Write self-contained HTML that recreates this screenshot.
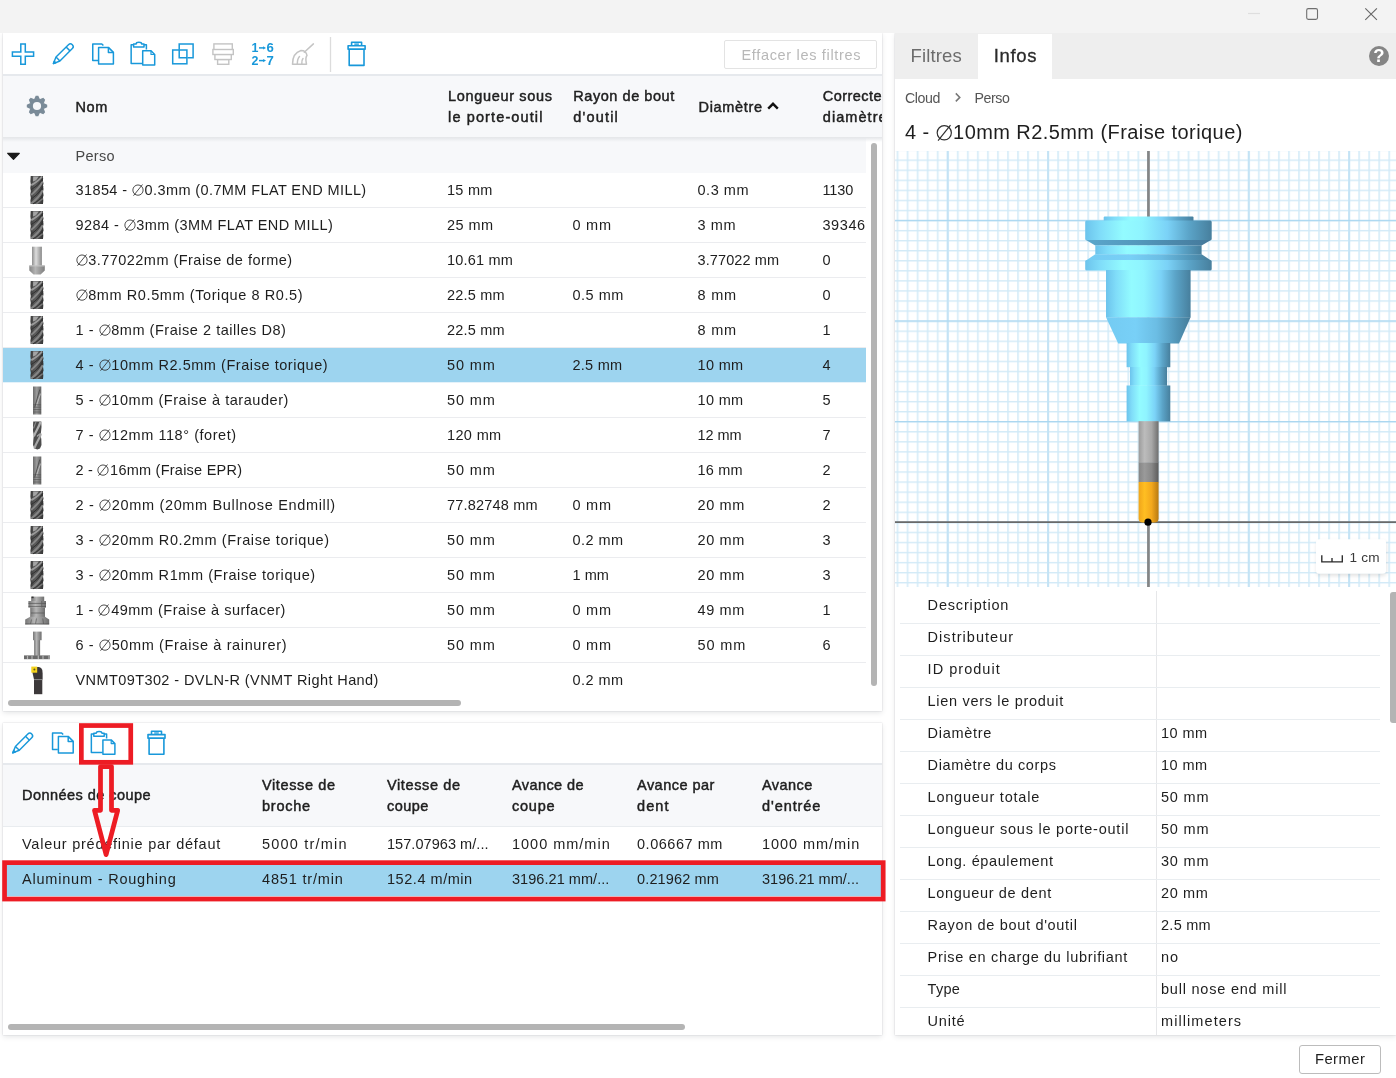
<!DOCTYPE html>
<html><head><meta charset="utf-8">
<style>
*{box-sizing:border-box;margin:0;padding:0}
html{background:#fff}html,body{width:1396px;height:1078px;overflow:hidden}body{will-change:transform;background:transparent}
body{font-family:"Liberation Sans",sans-serif;color:#1e1e1e;position:relative;font-size:14.5px;letter-spacing:.45px}
.abs{position:absolute}
#titlebar{left:0;top:0;width:1396px;height:33px;background:#f3f3f3;z-index:5}
.panel{background:#fff;box-shadow:0 2px 5px rgba(60,70,80,.13),0 0 1.5px rgba(60,70,80,.22);overflow:hidden}
#p1{left:3px;top:33px;width:879px;height:678px}
#p2{left:3px;top:723px;width:879px;height:312px}
#p3{left:895px;top:33px;width:501px;height:1002px}
.tb{left:0;top:0;width:100%;height:43px;border-bottom:2px solid #e6e9ed}
.tb svg{position:absolute}
.hdr{background:#f7f8fa;font-weight:normal;-webkit-text-stroke:.45px #1c1c1c;letter-spacing:.55px;color:#222;left:0;width:100%}
.hdr span, .row span, .grp span{position:absolute;white-space:nowrap}
.hdr span{line-height:21px}
.row{position:absolute;left:0;width:863px;height:35px;border-bottom:1px solid #ebecef}
.row span{top:0;line-height:34px}
.row>svg{position:absolute;left:16px;top:0px}
.row.sel{background:#9dd4ef;border-bottom-color:#e4f2fa}
.c0{left:72.5px}.c1{left:444px}.c2{left:569.4px}.c3{left:694.5px}.c4{left:819.4px}
.d0{left:19px}.d1{left:259px}.d2{left:384px}.d3{left:509px}.d4{left:634px}.d5{left:759px}
.sb{background:#b4b4b4;border-radius:3px}
.prow{position:absolute;left:5px;width:480px;height:32px;border-bottom:1px solid #e9edf0}
.prow span{position:absolute;top:0;line-height:27px;white-space:nowrap}
.prow .k{left:27.6px;letter-spacing:.65px}.prow .v{left:261px}
#clr{left:721px;top:6.5px;width:153px;height:29px;border:1px solid #e3e3e3;border-radius:2px;color:#b8b8b8;text-align:center;line-height:28px;font-size:14.5px}
.hshadow{left:0;width:100%;height:5px;background:linear-gradient(#e3e5e8,rgba(240,241,243,0))}
.tab{top:12px;font-size:18.5px;line-height:22px}
.bc{font-size:14.2px;color:#555;line-height:20px;top:55px}.b1{left:10px}.b2{left:79.6px}
.ttl{left:10px;top:86px;font-size:20px;line-height:26px;color:#1e1e1e;white-space:nowrap}
#close{left:1299.4px;top:1045.2px;width:81.4px;height:28.5px;border:1px solid #bcbcbc;border-radius:3px;background:#fff;text-align:center;line-height:27px;font-size:14.8px;color:#1e1e1e}
.h1{top:20.3px}.h2{top:10px}.h3{top:30.6px}
.row:last-of-type{}
.row.last{border-bottom-color:transparent}
.hc1{left:445.1px}.hc2{left:570.3px}.hc3{left:695.5px}.hc4{left:819.8px}.t1{top:21px}.t2{top:10px}.t3{top:31px}
.tf{left:15.6px;color:#6c6c6c}.ti{left:98.7px;color:#2a2a2a;-webkit-text-stroke:.3px #2a2a2a}.clt{left:738.4px;top:7.5px;line-height:29px;color:#b8b8b8;font-size:14.5px}
.gp{top:0;line-height:37px;color:#484848}
.dia{display:inline-block;width:.876em;height:.897em;vertical-align:-.085em;overflow:visible}
</style></head><body>
<svg width="0" height="0" style="position:absolute"><defs><linearGradient id="gd" x1="0" x2="1" y1="0" y2="0"><stop offset="0" stop-color="#3a3a3a"/><stop offset=".35" stop-color="#5c5c5c"/><stop offset=".7" stop-color="#484848"/><stop offset="1" stop-color="#343434"/></linearGradient><linearGradient id="gl" x1="0" x2="1" y1="0" y2="0"><stop offset="0" stop-color="#8e8e8e"/><stop offset=".4" stop-color="#dcdcdc"/><stop offset="1" stop-color="#8a8a8a"/></linearGradient><linearGradient id="gm" x1="0" x2="1" y1="0" y2="0"><stop offset="0" stop-color="#5c5c5c"/><stop offset=".4" stop-color="#ababab"/><stop offset="1" stop-color="#555"/></linearGradient><linearGradient id="gl2" x1="0" x2="1" y1="0" y2="0"><stop offset="0" stop-color="#858585"/><stop offset=".4" stop-color="#b4b4b4"/><stop offset="1" stop-color="#7e7e7e"/></linearGradient><linearGradient id="gt" x1="0" x2="1" y1="0" y2="0"><stop offset="0" stop-color="#6c6c6c"/><stop offset=".45" stop-color="#9c9c9c"/><stop offset="1" stop-color="#646464"/></linearGradient><linearGradient id="gf" x1="0" x2="1" y1="0" y2="0"><stop offset="0" stop-color="#767676"/><stop offset=".4" stop-color="#b6b6b6"/><stop offset="1" stop-color="#6e6e6e"/></linearGradient><filter id="tb" x="-10%" y="-10%" width="120%" height="120%"><feGaussianBlur stdDeviation=".55"/></filter></defs></svg>
<div id="titlebar" class="abs">
<svg class="abs" style="left:1240px;top:0" width="156" height="33" viewBox="1240 0 156 33"><path d="M1248 13.5 H1260" stroke="#dedede" stroke-width="1.2"/><rect x="1306.7" y="8.6" width="10.8" height="10.8" rx="1.6" fill="none" stroke="#6f6f6f" stroke-width="1.1"/><path d="M1365.3 8.3 L1376.9 19.9 M1376.9 8.3 L1365.3 19.9" stroke="#666" stroke-width="1.1"/></svg>
</div>

<div id="p1" class="abs panel">
 <div class="abs tb"><svg width="879" height="41" viewBox="3 33 879 41" style="position:absolute;left:0;top:0"><path d="M20.8 43.9 H25.3 V51.9 H33.6 V56.3 H25.3 V64.3 H20.8 V56.3 H12.4 V51.9 H20.8 Z" fill="none" stroke="#1898da" stroke-width="1.5" stroke-linejoin="miter"/><g transform="translate(53 64) scale(1.0) rotate(45)" fill="none" stroke="#1898da" stroke-width="1.45" stroke-linejoin="round"><path d="M0 -0.6 L-2.75 -7 V-24.6 a2.75 2.75 0 0 1 5.5 0 V-7 Z"/><path d="M-2.75 -21.3 H2.75"/><path d="M-2.75 -7 H2.75"/><path d="M-1.1 -2.9 L0 -0.6 L1.1 -2.9Z" fill="#1898da"/></g><g transform="translate(92 43.2) scale(1.0)" fill="none" stroke="#1898da" stroke-width="1.5" stroke-linejoin="round"><path d="M6 17.4 H0.75 V0.75 H9.8 L11.4 2.4"/><path d="M6.6 4.2 H16.4 L21.4 9.2 V20.9 H6.6 Z" fill="#fff"/><path d="M16.4 4.2 V9.2 H21.4"/></g><g transform="translate(130.4 41.5) scale(1.0)" fill="none" stroke="#1898da" stroke-width="1.5" stroke-linejoin="round"><path d="M12 21.9 H0.75 V3.3 H16 V8"/><path d="M3.2 5.6 V2.6 H5.6 C5.8 0.2 11.2 0.2 11.4 2.6 H13.6 V5.6 Z" fill="#fff"/><path d="M12.3 9.3 H20.6 L24.3 13 V23.6 H12.3 Z" fill="#fff"/><path d="M20.6 9.3 V13 H24.3" stroke-width="1.2"/></g><g fill="none" stroke="#1898da" stroke-width="1.5"><path d="M179.2 49.8 V44 H193.1 V57.8 H187.4"/><rect x="172.7" y="50" width="14.2" height="13.8"/><path d="M179.2 50 V57.8 H187"/></g><g fill="#fff" stroke="#c4c4c4" stroke-width="1.4"><rect x="217.6" y="59.5" width="11.2" height="4.8"/><rect x="214.9" y="54.4" width="16.4" height="5.1"/><rect x="213.9" y="43.9" width="18.4" height="5.8"/><rect x="212.9" y="49.5" width="20.4" height="5"/></g><g font-family="Liberation Sans" font-weight="bold" font-size="12.2" fill="#1898da"><text x="251.4" y="52" textLength="7.4" lengthAdjust="spacingAndGlyphs">1</text><text x="266.6" y="52" textLength="7.8" lengthAdjust="spacingAndGlyphs">6</text><text x="251.4" y="64.8" textLength="7.4" lengthAdjust="spacingAndGlyphs">2</text><text x="266.6" y="64.8" textLength="7.8" lengthAdjust="spacingAndGlyphs">7</text></g><g stroke="#1898da" stroke-width="1.5" fill="#1898da"><path d="M259 47.9 H264" fill="none"/><path d="M263.2 46.2 L266 47.9 L263.2 49.6Z" stroke="none"/><path d="M259 60.6 H264" fill="none"/><path d="M263.2 58.9 L266 60.6 L263.2 62.3Z" stroke="none"/></g><g fill="none" stroke="#c4c4c4" stroke-width="1.5" stroke-linecap="round" stroke-linejoin="round"><path d="M313.4 43.9 L304.3 52.2"/><path d="M301 50.5 C296 52 292.5 57 292.5 64.2 H306.5 C305.8 60 305 58 307 55.5 C306.5 52.5 304 50.5 301 50.5Z"/><path d="M297.3 64 C297.3 60 298 58 299.5 56.5"/><path d="M301.8 64 C301.5 61 302 59.5 303 58.5"/></g><path d="M330.5 37 V72" stroke="#dcdcdc" stroke-width="1.3"/><g transform="translate(347.3 41.5) scale(1.0)" fill="none" stroke="#1898da" stroke-width="1.6" stroke-linejoin="round"><path d="M4.3 4.2 V0.8 H14.3 V4.2"/><path d="M7 2.6 H11.6" stroke-width="1.3"/><rect x="0.8" y="4.2" width="17" height="3.6"/><rect x="1.9" y="7.8" width="14.8" height="16.1"/></g></svg>
  <div class="abs" id="clr"></div><span class="abs clt" style="letter-spacing:0.677px">Effacer les filtres</span>
 </div>
 <div class="abs hdr" style="top:43px;height:61px">
  <svg class="abs" style="left:22px;top:18px" width="24" height="24" viewBox="-12 -12 24 24"><g fill="#7a8b98"><circle r="7.4"/><path transform="rotate(0)" d="M-3 -6.6 L-1.3 -10.2 H1.3 L3 -6.6 Z M-3 6.6 L-1.3 10.2 H1.3 L3 6.6 Z"/><path transform="rotate(45)" d="M-3 -6.6 L-1.3 -10.2 H1.3 L3 -6.6 Z M-3 6.6 L-1.3 10.2 H1.3 L3 6.6 Z"/><path transform="rotate(90)" d="M-3 -6.6 L-1.3 -10.2 H1.3 L3 -6.6 Z M-3 6.6 L-1.3 10.2 H1.3 L3 6.6 Z"/><path transform="rotate(135)" d="M-3 -6.6 L-1.3 -10.2 H1.3 L3 -6.6 Z M-3 6.6 L-1.3 10.2 H1.3 L3 6.6 Z"/></g><circle r="4.1" fill="#f7f8fa"/></svg>
  <span class="c0 t1" style="letter-spacing:0.587px">Nom</span>
  <span class="hc1 t2" style="letter-spacing:0.655px">Longueur sous</span><span class="hc1 t3" style="letter-spacing:1.116px">le porte-outil</span>
  <span class="hc2 t2" style="letter-spacing:0.548px">Rayon de bout</span><span class="hc2 t3" style="letter-spacing:1.177px">d'outil</span>
  <span class="hc3 t1" style="letter-spacing:0.682px">Diamètre</span>
  <svg class="abs" style="left:763px;top:24px" width="14" height="12" viewBox="0 0 14 12"><path d="M2.2 8.6 L7 3.8 L11.8 8.6" fill="none" stroke="#111" stroke-width="2.4"/></svg>
  <span class="hc4 t2" style="letter-spacing:0.456px">Correcte</span><span class="hc4 t3" style="letter-spacing:1.054px">diamètre</span>
 </div>
 <div class="abs grp" style="left:0;top:105px;width:863px;height:34.5px;background:#f7f8fa">
  <svg class="abs" style="left:2px;top:13px" width="18" height="11" viewBox="0 0 18 11"><path d="M2.7 2.3 H14.3 L8.5 8.3 Z" fill="#1a1a1a" stroke="#1a1a1a" stroke-width="1.2" stroke-linejoin="round"/></svg>
  <span class="c0 gp" style="letter-spacing:0.302px">Perso</span>
 </div>
 <div class="abs hshadow" style="top:104px"></div>
<div class="row" style="top:139.5px"><svg width="36" height="34" viewBox="0 0 36 34" style=""><g transform="translate(0 -0.6)"><path d="M11.7 3.6 H24 V9 L24.5 11 L24 13 L24.5 16.5 L24 19 L24.5 22.5 L24 25 L24.3 28 L24 31.6 H11.7 L11.4 28 L11.8 25.5 L11.3 22 L11.8 18.5 L11.3 15.5 L11.8 12 L11.4 9 Z" fill="url(#gd)"/><g filter="url(#tb)" fill="none" stroke-linecap="round"><path d="M14.2 4.2 H19.8 L17 7.8 L14 9Z" fill="#a4a4a4" stroke="none"/><path d="M13 12.4 C16 10.5 20 8 22.6 4.6" stroke="#9a9a9a" stroke-width="2"/><path d="M12.8 22 C15.5 19.5 21 15 23.2 9.8" stroke="#868686" stroke-width="2"/><path d="M12.8 30.6 C15.5 28.5 21 24 23.2 18.6" stroke="#848484" stroke-width="2"/><path d="M17.8 31 L23.3 26.6" stroke="#7a7a7a" stroke-width="1.5"/><path d="M12.3 17.2 C15.5 15 21 11.5 23.6 6.8" stroke="#303030" stroke-width="1"/><path d="M12.3 26.6 C15.5 24.2 21 20 23.7 14.6" stroke="#303030" stroke-width="1"/><path d="M14.3 31.3 C17 29.8 22 27 23.7 23.2" stroke="#303030" stroke-width="1"/></g></g></svg><span class="c0" style="letter-spacing:0.395px">31854 - <svg class="dia" viewBox="0 0 12.7 13"><circle cx="6" cy="7.1" r="5.15" fill="none" stroke="#2e2e2e" stroke-width=".85"/><path d="M1.5 12.7 L10.5 1.5" stroke="#2e2e2e" stroke-width=".85"/></svg>0.3mm (0.7MM FLAT END MILL)</span><span class="c1" style="letter-spacing:0.268px">15 mm</span><span class="c3" style="letter-spacing:0.531px">0.3 mm</span><span class="c4" style="letter-spacing:-0.096px">1130</span></div>
<div class="row" style="top:174.5px"><svg width="36" height="34" viewBox="0 0 36 34" style=""><g transform="translate(0 -0.6)"><path d="M11.7 3.6 H24 V9 L24.5 11 L24 13 L24.5 16.5 L24 19 L24.5 22.5 L24 25 L24.3 28 L24 31.6 H11.7 L11.4 28 L11.8 25.5 L11.3 22 L11.8 18.5 L11.3 15.5 L11.8 12 L11.4 9 Z" fill="url(#gd)"/><g filter="url(#tb)" fill="none" stroke-linecap="round"><path d="M14.2 4.2 H19.8 L17 7.8 L14 9Z" fill="#a4a4a4" stroke="none"/><path d="M13 12.4 C16 10.5 20 8 22.6 4.6" stroke="#9a9a9a" stroke-width="2"/><path d="M12.8 22 C15.5 19.5 21 15 23.2 9.8" stroke="#868686" stroke-width="2"/><path d="M12.8 30.6 C15.5 28.5 21 24 23.2 18.6" stroke="#848484" stroke-width="2"/><path d="M17.8 31 L23.3 26.6" stroke="#7a7a7a" stroke-width="1.5"/><path d="M12.3 17.2 C15.5 15 21 11.5 23.6 6.8" stroke="#303030" stroke-width="1"/><path d="M12.3 26.6 C15.5 24.2 21 20 23.7 14.6" stroke="#303030" stroke-width="1"/><path d="M14.3 31.3 C17 29.8 22 27 23.7 23.2" stroke="#303030" stroke-width="1"/></g></g></svg><span class="c0" style="letter-spacing:0.426px">9284 - <svg class="dia" viewBox="0 0 12.7 13"><circle cx="6" cy="7.1" r="5.15" fill="none" stroke="#2e2e2e" stroke-width=".85"/><path d="M1.5 12.7 L10.5 1.5" stroke="#2e2e2e" stroke-width=".85"/></svg>3mm (3MM FLAT END MILL)</span><span class="c1" style="letter-spacing:0.418px">25 mm</span><span class="c2" style="letter-spacing:0.817px">0 mm</span><span class="c3" style="letter-spacing:0.617px">3 mm</span><span class="c4" style="letter-spacing:0.618px">39346</span></div>
<div class="row" style="top:209.5px"><svg width="36" height="34" viewBox="0 0 36 34" style=""><rect x="13" y="3.7" width="9.9" height="19" fill="url(#gl)"/><path d="M10.3 22.6 H25.8 V27.4 L21.6 31.4 H14.5 L10.3 27.4 Z" fill="url(#gl2)"/><path d="M10.6 23 H25.5" stroke="#c4c4c4" stroke-width=".9"/></svg><span class="c0" style="letter-spacing:0.467px"><svg class="dia" viewBox="0 0 12.7 13"><circle cx="6" cy="7.1" r="5.15" fill="none" stroke="#2e2e2e" stroke-width=".85"/><path d="M1.5 12.7 L10.5 1.5" stroke="#2e2e2e" stroke-width=".85"/></svg>3.77022mm (Fraise de forme)</span><span class="c1" style="letter-spacing:0.202px">10.61 mm</span><span class="c3" style="letter-spacing:0.110px">3.77022 mm</span><span class="c4">0</span></div>
<div class="row" style="top:244.5px"><svg width="36" height="34" viewBox="0 0 36 34" style=""><g transform="translate(0 -0.6)"><path d="M11.7 3.6 H24 V9 L24.5 11 L24 13 L24.5 16.5 L24 19 L24.5 22.5 L24 25 L24.3 28 L24 31.6 H11.7 L11.4 28 L11.8 25.5 L11.3 22 L11.8 18.5 L11.3 15.5 L11.8 12 L11.4 9 Z" fill="url(#gd)"/><g filter="url(#tb)" fill="none" stroke-linecap="round"><path d="M14.2 4.2 H19.8 L17 7.8 L14 9Z" fill="#a4a4a4" stroke="none"/><path d="M13 12.4 C16 10.5 20 8 22.6 4.6" stroke="#9a9a9a" stroke-width="2"/><path d="M12.8 22 C15.5 19.5 21 15 23.2 9.8" stroke="#868686" stroke-width="2"/><path d="M12.8 30.6 C15.5 28.5 21 24 23.2 18.6" stroke="#848484" stroke-width="2"/><path d="M17.8 31 L23.3 26.6" stroke="#7a7a7a" stroke-width="1.5"/><path d="M12.3 17.2 C15.5 15 21 11.5 23.6 6.8" stroke="#303030" stroke-width="1"/><path d="M12.3 26.6 C15.5 24.2 21 20 23.7 14.6" stroke="#303030" stroke-width="1"/><path d="M14.3 31.3 C17 29.8 22 27 23.7 23.2" stroke="#303030" stroke-width="1"/></g></g></svg><span class="c0" style="letter-spacing:0.592px"><svg class="dia" viewBox="0 0 12.7 13"><circle cx="6" cy="7.1" r="5.15" fill="none" stroke="#2e2e2e" stroke-width=".85"/><path d="M1.5 12.7 L10.5 1.5" stroke="#2e2e2e" stroke-width=".85"/></svg>8mm R0.5mm (Torique 8 R0.5)</span><span class="c1" style="letter-spacing:0.213px">22.5 mm</span><span class="c2" style="letter-spacing:0.531px">0.5 mm</span><span class="c3" style="letter-spacing:0.817px">8 mm</span><span class="c4">0</span></div>
<div class="row" style="top:279.5px"><svg width="36" height="34" viewBox="0 0 36 34" style=""><g transform="translate(0 -0.6)"><path d="M11.7 3.6 H24 V9 L24.5 11 L24 13 L24.5 16.5 L24 19 L24.5 22.5 L24 25 L24.3 28 L24 31.6 H11.7 L11.4 28 L11.8 25.5 L11.3 22 L11.8 18.5 L11.3 15.5 L11.8 12 L11.4 9 Z" fill="url(#gd)"/><g filter="url(#tb)" fill="none" stroke-linecap="round"><path d="M14.2 4.2 H19.8 L17 7.8 L14 9Z" fill="#a4a4a4" stroke="none"/><path d="M13 12.4 C16 10.5 20 8 22.6 4.6" stroke="#9a9a9a" stroke-width="2"/><path d="M12.8 22 C15.5 19.5 21 15 23.2 9.8" stroke="#868686" stroke-width="2"/><path d="M12.8 30.6 C15.5 28.5 21 24 23.2 18.6" stroke="#848484" stroke-width="2"/><path d="M17.8 31 L23.3 26.6" stroke="#7a7a7a" stroke-width="1.5"/><path d="M12.3 17.2 C15.5 15 21 11.5 23.6 6.8" stroke="#303030" stroke-width="1"/><path d="M12.3 26.6 C15.5 24.2 21 20 23.7 14.6" stroke="#303030" stroke-width="1"/><path d="M14.3 31.3 C17 29.8 22 27 23.7 23.2" stroke="#303030" stroke-width="1"/></g></g></svg><span class="c0" style="letter-spacing:0.528px">1 - <svg class="dia" viewBox="0 0 12.7 13"><circle cx="6" cy="7.1" r="5.15" fill="none" stroke="#2e2e2e" stroke-width=".85"/><path d="M1.5 12.7 L10.5 1.5" stroke="#2e2e2e" stroke-width=".85"/></svg>8mm (Fraise 2 tailles D8)</span><span class="c1" style="letter-spacing:0.213px">22.5 mm</span><span class="c3" style="letter-spacing:0.817px">8 mm</span><span class="c4">1</span></div>
<div class="row sel" style="top:314.5px"><svg width="36" height="34" viewBox="0 0 36 34" style=""><g transform="translate(0 -0.6)"><path d="M11.7 3.6 H24 V9 L24.5 11 L24 13 L24.5 16.5 L24 19 L24.5 22.5 L24 25 L24.3 28 L24 31.6 H11.7 L11.4 28 L11.8 25.5 L11.3 22 L11.8 18.5 L11.3 15.5 L11.8 12 L11.4 9 Z" fill="url(#gd)"/><g filter="url(#tb)" fill="none" stroke-linecap="round"><path d="M14.2 4.2 H19.8 L17 7.8 L14 9Z" fill="#a4a4a4" stroke="none"/><path d="M13 12.4 C16 10.5 20 8 22.6 4.6" stroke="#9a9a9a" stroke-width="2"/><path d="M12.8 22 C15.5 19.5 21 15 23.2 9.8" stroke="#868686" stroke-width="2"/><path d="M12.8 30.6 C15.5 28.5 21 24 23.2 18.6" stroke="#848484" stroke-width="2"/><path d="M17.8 31 L23.3 26.6" stroke="#7a7a7a" stroke-width="1.5"/><path d="M12.3 17.2 C15.5 15 21 11.5 23.6 6.8" stroke="#303030" stroke-width="1"/><path d="M12.3 26.6 C15.5 24.2 21 20 23.7 14.6" stroke="#303030" stroke-width="1"/><path d="M14.3 31.3 C17 29.8 22 27 23.7 23.2" stroke="#303030" stroke-width="1"/></g></g></svg><span class="c0" style="letter-spacing:0.551px">4 - <svg class="dia" viewBox="0 0 12.7 13"><circle cx="6" cy="7.1" r="5.15" fill="none" stroke="#2e2e2e" stroke-width=".85"/><path d="M1.5 12.7 L10.5 1.5" stroke="#2e2e2e" stroke-width=".85"/></svg>10mm R2.5mm (Fraise torique)</span><span class="c1" style="letter-spacing:0.893px">50 mm</span><span class="c2" style="letter-spacing:0.291px">2.5 mm</span><span class="c3" style="letter-spacing:0.343px">10 mm</span><span class="c4">4</span></div>
<div class="row" style="top:349.5px"><svg width="36" height="34" viewBox="0 0 36 34" style=""><rect x="14" y="3.5" width="8.3" height="28" fill="url(#gt)"/><g filter="url(#tb)" stroke-linecap="round"><path d="M20.6 7 L15.8 24" stroke="#4a4a4a" stroke-width=".9"/><path d="M21.4 11 L17.4 23" stroke="#c0c0c0" stroke-width=".9"/><g stroke="#555" stroke-width=".7"><path d="M14.6 21.8 H21.7"/><path d="M14.6 24.2 H21.7"/><path d="M14.6 26.6 H21.7"/><path d="M14.6 29 H21.7"/></g></g></svg><span class="c0" style="letter-spacing:0.549px">5 - <svg class="dia" viewBox="0 0 12.7 13"><circle cx="6" cy="7.1" r="5.15" fill="none" stroke="#2e2e2e" stroke-width=".85"/><path d="M1.5 12.7 L10.5 1.5" stroke="#2e2e2e" stroke-width=".85"/></svg>10mm (Fraise à tarauder)</span><span class="c1" style="letter-spacing:0.893px">50 mm</span><span class="c3" style="letter-spacing:0.343px">10 mm</span><span class="c4">5</span></div>
<div class="row" style="top:384.5px"><svg width="36" height="34" viewBox="0 0 36 34" style=""><path d="M14.2 3.6 H22.3 L22.5 9 L22 14 L21.6 17 L22.3 21 L22.5 27 L21 30.5 L18.4 31.6 L15.5 30.5 L14 27 L14.3 22 L14.8 17.5 L14 13 L14 8 Z" fill="#4c4c4c"/><g filter="url(#tb)" fill="none" stroke-linecap="round"><path d="M15.2 17.5 C17 13 20 9 21.2 4.6" stroke="#b0b0b0" stroke-width="2.2"/><path d="M15.6 29.8 C17 25 20.5 21 21.6 16.4" stroke="#a6a6a6" stroke-width="2.2"/><path d="M14.6 10 L16.8 4.4" stroke="#8a8a8a" stroke-width="1.2"/><path d="M18.2 18.2 L20.4 16.2" stroke="#d8d8d8" stroke-width="1"/></g></svg><span class="c0" style="letter-spacing:0.553px">7 - <svg class="dia" viewBox="0 0 12.7 13"><circle cx="6" cy="7.1" r="5.15" fill="none" stroke="#2e2e2e" stroke-width=".85"/><path d="M1.5 12.7 L10.5 1.5" stroke="#2e2e2e" stroke-width=".85"/></svg>12mm 118° (foret)</span><span class="c1" style="letter-spacing:0.362px">120 mm</span><span class="c3" style="letter-spacing:-0.057px">12 mm</span><span class="c4">7</span></div>
<div class="row" style="top:419.5px"><svg width="36" height="34" viewBox="0 0 36 34" style=""><rect x="14" y="3.5" width="8.3" height="28" fill="url(#gt)"/><g filter="url(#tb)" stroke-linecap="round"><path d="M20.6 7 L15.8 24" stroke="#4a4a4a" stroke-width=".9"/><path d="M21.4 11 L17.4 23" stroke="#c0c0c0" stroke-width=".9"/><g stroke="#555" stroke-width=".7"><path d="M14.6 21.8 H21.7"/><path d="M14.6 24.2 H21.7"/><path d="M14.6 26.6 H21.7"/><path d="M14.6 29 H21.7"/></g></g></svg><span class="c0" style="letter-spacing:0.240px">2 - <svg class="dia" viewBox="0 0 12.7 13"><circle cx="6" cy="7.1" r="5.15" fill="none" stroke="#2e2e2e" stroke-width=".85"/><path d="M1.5 12.7 L10.5 1.5" stroke="#2e2e2e" stroke-width=".85"/></svg>16mm (Fraise EPR)</span><span class="c1" style="letter-spacing:0.893px">50 mm</span><span class="c3" style="letter-spacing:0.168px">16 mm</span><span class="c4">2</span></div>
<div class="row" style="top:454.5px"><svg width="36" height="34" viewBox="0 0 36 34" style=""><g transform="translate(0 -0.6)"><path d="M11.7 3.6 H24 V9 L24.5 11 L24 13 L24.5 16.5 L24 19 L24.5 22.5 L24 25 L24.3 28 L24 31.6 H11.7 L11.4 28 L11.8 25.5 L11.3 22 L11.8 18.5 L11.3 15.5 L11.8 12 L11.4 9 Z" fill="url(#gd)"/><g filter="url(#tb)" fill="none" stroke-linecap="round"><path d="M14.2 4.2 H19.8 L17 7.8 L14 9Z" fill="#a4a4a4" stroke="none"/><path d="M13 12.4 C16 10.5 20 8 22.6 4.6" stroke="#9a9a9a" stroke-width="2"/><path d="M12.8 22 C15.5 19.5 21 15 23.2 9.8" stroke="#868686" stroke-width="2"/><path d="M12.8 30.6 C15.5 28.5 21 24 23.2 18.6" stroke="#848484" stroke-width="2"/><path d="M17.8 31 L23.3 26.6" stroke="#7a7a7a" stroke-width="1.5"/><path d="M12.3 17.2 C15.5 15 21 11.5 23.6 6.8" stroke="#303030" stroke-width="1"/><path d="M12.3 26.6 C15.5 24.2 21 20 23.7 14.6" stroke="#303030" stroke-width="1"/><path d="M14.3 31.3 C17 29.8 22 27 23.7 23.2" stroke="#303030" stroke-width="1"/></g></g></svg><span class="c0" style="letter-spacing:0.662px">2 - <svg class="dia" viewBox="0 0 12.7 13"><circle cx="6" cy="7.1" r="5.15" fill="none" stroke="#2e2e2e" stroke-width=".85"/><path d="M1.5 12.7 L10.5 1.5" stroke="#2e2e2e" stroke-width=".85"/></svg>20mm (20mm Bullnose Endmill)</span><span class="c1" style="letter-spacing:0.183px">77.82748 mm</span><span class="c2" style="letter-spacing:0.817px">0 mm</span><span class="c3" style="letter-spacing:0.643px">20 mm</span><span class="c4">2</span></div>
<div class="row" style="top:489.5px"><svg width="36" height="34" viewBox="0 0 36 34" style=""><g transform="translate(0 -0.6)"><path d="M11.7 3.6 H24 V9 L24.5 11 L24 13 L24.5 16.5 L24 19 L24.5 22.5 L24 25 L24.3 28 L24 31.6 H11.7 L11.4 28 L11.8 25.5 L11.3 22 L11.8 18.5 L11.3 15.5 L11.8 12 L11.4 9 Z" fill="url(#gd)"/><g filter="url(#tb)" fill="none" stroke-linecap="round"><path d="M14.2 4.2 H19.8 L17 7.8 L14 9Z" fill="#a4a4a4" stroke="none"/><path d="M13 12.4 C16 10.5 20 8 22.6 4.6" stroke="#9a9a9a" stroke-width="2"/><path d="M12.8 22 C15.5 19.5 21 15 23.2 9.8" stroke="#868686" stroke-width="2"/><path d="M12.8 30.6 C15.5 28.5 21 24 23.2 18.6" stroke="#848484" stroke-width="2"/><path d="M17.8 31 L23.3 26.6" stroke="#7a7a7a" stroke-width="1.5"/><path d="M12.3 17.2 C15.5 15 21 11.5 23.6 6.8" stroke="#303030" stroke-width="1"/><path d="M12.3 26.6 C15.5 24.2 21 20 23.7 14.6" stroke="#303030" stroke-width="1"/><path d="M14.3 31.3 C17 29.8 22 27 23.7 23.2" stroke="#303030" stroke-width="1"/></g></g></svg><span class="c0" style="letter-spacing:0.598px">3 - <svg class="dia" viewBox="0 0 12.7 13"><circle cx="6" cy="7.1" r="5.15" fill="none" stroke="#2e2e2e" stroke-width=".85"/><path d="M1.5 12.7 L10.5 1.5" stroke="#2e2e2e" stroke-width=".85"/></svg>20mm R0.2mm (Fraise torique)</span><span class="c1" style="letter-spacing:0.893px">50 mm</span><span class="c2" style="letter-spacing:0.471px">0.2 mm</span><span class="c3" style="letter-spacing:0.643px">20 mm</span><span class="c4">3</span></div>
<div class="row" style="top:524.5px"><svg width="36" height="34" viewBox="0 0 36 34" style=""><g transform="translate(0 -0.6)"><path d="M11.7 3.6 H24 V9 L24.5 11 L24 13 L24.5 16.5 L24 19 L24.5 22.5 L24 25 L24.3 28 L24 31.6 H11.7 L11.4 28 L11.8 25.5 L11.3 22 L11.8 18.5 L11.3 15.5 L11.8 12 L11.4 9 Z" fill="url(#gd)"/><g filter="url(#tb)" fill="none" stroke-linecap="round"><path d="M14.2 4.2 H19.8 L17 7.8 L14 9Z" fill="#a4a4a4" stroke="none"/><path d="M13 12.4 C16 10.5 20 8 22.6 4.6" stroke="#9a9a9a" stroke-width="2"/><path d="M12.8 22 C15.5 19.5 21 15 23.2 9.8" stroke="#868686" stroke-width="2"/><path d="M12.8 30.6 C15.5 28.5 21 24 23.2 18.6" stroke="#848484" stroke-width="2"/><path d="M17.8 31 L23.3 26.6" stroke="#7a7a7a" stroke-width="1.5"/><path d="M12.3 17.2 C15.5 15 21 11.5 23.6 6.8" stroke="#303030" stroke-width="1"/><path d="M12.3 26.6 C15.5 24.2 21 20 23.7 14.6" stroke="#303030" stroke-width="1"/><path d="M14.3 31.3 C17 29.8 22 27 23.7 23.2" stroke="#303030" stroke-width="1"/></g></g></svg><span class="c0" style="letter-spacing:0.574px">3 - <svg class="dia" viewBox="0 0 12.7 13"><circle cx="6" cy="7.1" r="5.15" fill="none" stroke="#2e2e2e" stroke-width=".85"/><path d="M1.5 12.7 L10.5 1.5" stroke="#2e2e2e" stroke-width=".85"/></svg>20mm R1mm (Fraise torique)</span><span class="c1" style="letter-spacing:0.893px">50 mm</span><span class="c2" style="letter-spacing:0.083px">1 mm</span><span class="c3" style="letter-spacing:0.643px">20 mm</span><span class="c4">3</span></div>
<div class="row" style="top:559.5px"><svg width="36" height="34" viewBox="0 0 36 34" style=""><rect x="12.2" y="3.6" width="13" height="5" fill="url(#gf)"/><rect x="9.4" y="8" width="17.6" height="6.6" fill="url(#gf)"/><rect x="11.2" y="14.4" width="14.8" height="10" fill="url(#gf)"/><path d="M11.2 23.8 H26 L30.2 26.4 V31.4 H6.2 V26.4 Z" fill="url(#gf)"/><g stroke="#4a4a4a" stroke-width=".8" opacity=".75"><path d="M9.4 10.4 H27"/><path d="M9.4 13.6 H27"/><path d="M12 20 H25.2"/><path d="M22.8 8 V14.5"/><path d="M6.2 30.9 H30.2"/><path d="M12.5 26.5 L11.5 31"/><path d="M17.5 25.5 L16.5 31"/><path d="M23.8 25.5 L24.5 31"/></g><rect x="12.6" y="3.6" width="2" height="1.6" fill="#333"/></svg><span class="c0" style="letter-spacing:0.500px">1 - <svg class="dia" viewBox="0 0 12.7 13"><circle cx="6" cy="7.1" r="5.15" fill="none" stroke="#2e2e2e" stroke-width=".85"/><path d="M1.5 12.7 L10.5 1.5" stroke="#2e2e2e" stroke-width=".85"/></svg>49mm (Fraise à surfacer)</span><span class="c1" style="letter-spacing:0.893px">50 mm</span><span class="c2" style="letter-spacing:0.817px">0 mm</span><span class="c3" style="letter-spacing:0.643px">49 mm</span><span class="c4">1</span></div>
<div class="row" style="top:594.5px"><svg width="36" height="34" viewBox="0 0 36 34" style=""><rect x="15.1" y="11.8" width="6" height="16" fill="url(#gf)"/><rect x="14" y="3.6" width="8.6" height="8.6" fill="url(#gf)"/><rect x="5" y="27.4" width="26" height="3.8" fill="#6a6a6a"/><g stroke="#b4b4b4" stroke-width="1.2"><path d="M8.5 27.6 V31"/><path d="M13 27.6 V31"/><path d="M19.3 27.6 V31"/><path d="M24 27.6 V31"/><path d="M30 27.6 V31"/></g></svg><span class="c0" style="letter-spacing:0.629px">6 - <svg class="dia" viewBox="0 0 12.7 13"><circle cx="6" cy="7.1" r="5.15" fill="none" stroke="#2e2e2e" stroke-width=".85"/><path d="M1.5 12.7 L10.5 1.5" stroke="#2e2e2e" stroke-width=".85"/></svg>50mm (Fraise à rainurer)</span><span class="c1" style="letter-spacing:0.893px">50 mm</span><span class="c2" style="letter-spacing:0.817px">0 mm</span><span class="c3" style="letter-spacing:0.893px">50 mm</span><span class="c4">6</span></div>
<div class="row last" style="top:629.5px"><svg width="36" height="34" viewBox="0 0 36 34" style=""><path d="M13.5 4.1 H20 Q22.6 4.4 23.3 7 L23.6 10 V16.6 H15 L13.5 9.7 Z" fill="#3a3638"/><rect x="15" y="16.6" width="8.3" height="14.6" fill="#3d393b"/><path d="M15 16.6 H23.5" stroke="#8c8c8c" stroke-width=".8"/><rect x="12.3" y="3.6" width="5.9" height="6.1" fill="#f3d21c"/><circle cx="15.4" cy="6.5" r="1" fill="#6a5a12"/></svg><span class="c0" style="letter-spacing:0.408px">VNMT09T302 - DVLN-R (VNMT Right Hand)</span><span class="c2" style="letter-spacing:0.471px">0.2 mm</span></div>

 <div class="abs sb" style="left:868px;top:110px;width:6px;height:542.5px"></div>
 <div class="abs sb" style="left:5px;top:666.5px;width:453px;height:6.5px"></div>
</div>

<div id="p2" class="abs panel">
 <div class="abs tb" style="height:42px"><svg width="879" height="41" viewBox="3 723 879 41" style="position:absolute;left:0;top:0"><g transform="translate(12.4 753.3) scale(1) rotate(45)" fill="none" stroke="#1898da" stroke-width="1.45" stroke-linejoin="round"><path d="M0 -0.6 L-2.75 -7 V-24.6 a2.75 2.75 0 0 1 5.5 0 V-7 Z"/><path d="M-2.75 -21.3 H2.75"/><path d="M-2.75 -7 H2.75"/><path d="M-1.1 -2.9 L0 -0.6 L1.1 -2.9Z" fill="#1898da"/></g><g transform="translate(51.8 732.2) scale(1)" fill="none" stroke="#1898da" stroke-width="1.5" stroke-linejoin="round"><path d="M6 17.4 H0.75 V0.75 H9.8 L11.4 2.4"/><path d="M6.6 4.2 H16.4 L21.4 9.2 V20.9 H6.6 Z" fill="#fff"/><path d="M16.4 4.2 V9.2 H21.4"/></g><g transform="translate(90.6 730.6) scale(1)" fill="none" stroke="#1898da" stroke-width="1.5" stroke-linejoin="round"><path d="M12 21.9 H0.75 V3.3 H16 V8"/><path d="M3.2 5.6 V2.6 H5.6 C5.8 0.2 11.2 0.2 11.4 2.6 H13.6 V5.6 Z" fill="#fff"/><path d="M12.3 9.3 H20.6 L24.3 13 V23.6 H12.3 Z" fill="#fff"/><path d="M20.6 9.3 V13 H24.3" stroke-width="1.2"/></g><g transform="translate(147.2 730.4) scale(1)" fill="none" stroke="#1898da" stroke-width="1.6" stroke-linejoin="round"><path d="M4.3 4.2 V0.8 H14.3 V4.2"/><path d="M7 2.6 H11.6" stroke-width="1.3"/><rect x="0.8" y="4.2" width="17" height="3.6"/><rect x="1.9" y="7.8" width="14.8" height="16.1"/></g></svg></div>
 <div class="abs hdr" style="top:42px;height:61px">
  <span class="d0 h1" style="letter-spacing:0.463px">Données de coupe</span>
  <span class="d1 h2" style="letter-spacing:0.616px">Vitesse de</span><span class="d1 h3" style="letter-spacing:0.751px">broche</span>
  <span class="d2 h2" style="letter-spacing:0.616px">Vitesse de</span><span class="d2 h3" style="letter-spacing:0.421px">coupe</span>
  <span class="d3 h2" style="letter-spacing:0.417px">Avance de</span><span class="d3 h3" style="letter-spacing:0.771px">coupe</span>
  <span class="d4 h2" style="letter-spacing:0.478px">Avance par</span><span class="d4 h3" style="letter-spacing:1.122px">dent</span>
  <span class="d5 h2" style="letter-spacing:0.458px">Avance</span><span class="d5 h3" style="letter-spacing:0.921px">d'entrée</span>
 </div>
 
 <div class="row" style="top:103px;width:879px;height:35.5px;border-top:1px solid #e9ecef"><span class="d0" style="letter-spacing:0.756px">Valeur prédéfinie par défaut</span><span class="d1" style="letter-spacing:1.195px">5000 tr/min</span><span class="d2" style="letter-spacing:0.052px">157.07963 m/...</span><span class="d3" style="letter-spacing:0.986px">1000 mm/min</span><span class="d4" style="letter-spacing:0.532px">0.06667 mm</span><span class="d5" style="letter-spacing:0.946px">1000 mm/min</span></div>
 <div class="row sel" style="top:138.5px;width:879px"><span class="d0" style="letter-spacing:0.798px">Aluminum - Roughing</span><span class="d1" style="letter-spacing:0.835px">4851 tr/min</span><span class="d2" style="letter-spacing:0.540px">152.4 m/min</span><span class="d3" style="letter-spacing:0.052px">3196.21 mm/...</span><span class="d4" style="letter-spacing:0.143px">0.21962 mm</span><span class="d5" style="letter-spacing:0.022px">3196.21 mm/...</span></div>
 <div class="abs sb" style="left:5px;top:300.5px;width:677px;height:6.5px"></div>
</div>

<div id="p3" class="abs panel">
 <div class="abs" style="left:0;top:0;width:501px;height:46px;background:#eeeeee"></div>
 <span class="abs tab tf" style="letter-spacing:0.121px">Filtres</span>
 <div class="abs" style="left:83px;top:1px;width:74px;height:46px;background:#fff"></div>
 <span class="abs tab ti" style="letter-spacing:0.673px">Infos</span>
 <svg class="abs" style="left:472px;top:11px" width="24" height="24" viewBox="-12 -12 24 24"><circle r="10" fill="#858585"/><text x="0" y="6.3" text-anchor="middle" font-family="Liberation Sans" font-weight="bold" font-size="18.5" fill="#fff">?</text></svg>
 <span class="abs bc b1" style="letter-spacing:-0.395px">Cloud</span>
 <svg class="abs" style="left:57.5px;top:58px" width="10" height="13" viewBox="0 0 10 13"><path d="M2.8 2.4 L6.8 6.4 L2.8 10.4" fill="none" stroke="#777" stroke-width="1.5"/></svg>
 <span class="abs bc b2" style="letter-spacing:-0.441px">Perso</span>
 <span class="abs ttl" style="letter-spacing:0.423px">4 - <svg class="dia" viewBox="0 0 12.7 13"><circle cx="6" cy="7.1" r="5.15" fill="none" stroke="#2e2e2e" stroke-width=".85"/><path d="M1.5 12.7 L10.5 1.5" stroke="#2e2e2e" stroke-width=".85"/></svg>10mm R2.5mm (Fraise torique)</span>
 <svg width="501" height="436" viewBox="895 151 501 436" style="position:absolute;left:0;top:118px">
<defs>
<pattern id="gminv" x="1147.45" y="0" width="10.035" height="50" patternUnits="userSpaceOnUse"><path d="M1 0 V50" stroke="#dceff9" stroke-width="2" fill="none"/></pattern>
<pattern id="gminh" x="0" y="521.65" width="50" height="10.06" patternUnits="userSpaceOnUse"><path d="M0 0.65 H50" stroke="#d2eaf7" stroke-width="1.3" fill="none"/></pattern>
<pattern id="gmajv" x="1147.45" y="0" width="100.35" height="50" patternUnits="userSpaceOnUse"><path d="M1 0 V50" stroke="#c4e3f5" stroke-width="2" fill="none"/></pattern>
<pattern id="gmajh" x="0" y="521.65" width="50" height="100.6" patternUnits="userSpaceOnUse"><path d="M0 0.65 H50" stroke="#a9d6f0" stroke-width="1.3" fill="none"/></pattern>
<linearGradient id="hb" x1="0" x2="1" y1="0" y2="0"><stop offset="0" stop-color="#6cc3ec"/><stop offset=".12" stop-color="#80ddf9"/><stop offset=".3" stop-color="#93fbff"/><stop offset=".45" stop-color="#8ff4ff"/><stop offset=".65" stop-color="#7bd2f7"/><stop offset=".82" stop-color="#5ba4c8"/><stop offset="1" stop-color="#477f9d"/></linearGradient>
<linearGradient id="ht" x1="0" x2="1" y1="0" y2="0"><stop offset="0" stop-color="#74cbf2"/><stop offset=".35" stop-color="#78d0f7"/><stop offset=".6" stop-color="#6bbde4"/><stop offset=".85" stop-color="#5093b5"/><stop offset="1" stop-color="#457c99"/></linearGradient>
<linearGradient id="hg" x1="0" x2="1" y1="0" y2="0"><stop offset="0" stop-color="#5aa6cb"/><stop offset=".4" stop-color="#5499bd"/><stop offset="1" stop-color="#44789a"/></linearGradient>
<linearGradient id="s1" x1="0" x2="1" y1="0" y2="0"><stop offset="0" stop-color="#9b9b9b"/><stop offset=".3" stop-color="#bcbcbc"/><stop offset=".65" stop-color="#a8a8a8"/><stop offset="1" stop-color="#6e6e6e"/></linearGradient>
<linearGradient id="s2" x1="0" x2="1" y1="0" y2="0"><stop offset="0" stop-color="#858585"/><stop offset=".3" stop-color="#9a9a9a"/><stop offset=".65" stop-color="#888"/><stop offset="1" stop-color="#5c5c5c"/></linearGradient>
<linearGradient id="s3" x1="0" x2="1" y1="0" y2="0"><stop offset="0" stop-color="#f0a51a"/><stop offset=".3" stop-color="#ffbe22"/><stop offset=".65" stop-color="#f3a81c"/><stop offset="1" stop-color="#b87a12"/></linearGradient>
<filter id="blr" x="-20%" y="-30%" width="140%" height="160%"><feGaussianBlur stdDeviation="2"/></filter>
</defs>
<rect x="895" y="151" width="501" height="436" fill="#fff"/>
<rect x="895" y="151" width="501" height="436" fill="url(#gminv)"/>
<rect x="895" y="151" width="501" height="436" fill="url(#gminh)"/>
<rect x="895" y="151" width="501" height="436" fill="url(#gmajv)"/>
<rect x="895" y="151" width="501" height="436" fill="url(#gmajh)"/>
<path d="M1148.45 151 V218 M1148.45 520 V587" stroke="#858585" stroke-width="2.7"/>
<path d="M895 522.2 H1396" stroke="#6a6a6a" stroke-width="1.7"/>
<!-- holder -->
<rect x="1103.7" y="216.4" width="89.8" height="5" rx="1" fill="url(#hb)"/>
<rect x="1085.2" y="220.6" width="126.5" height="19.6" rx="1.5" fill="url(#hb)"/>
<path d="M1086 240 H1211 L1201.6 245.6 H1095.3 Z" fill="url(#hg)"/>
<rect x="1095.3" y="245.4" width="106.3" height="9" fill="url(#hb)"/>
<path d="M1095.3 254.2 H1201.6 L1211 260.4 H1086 Z" fill="url(#ht)"/>
<rect x="1085.2" y="260" width="126.5" height="10.4" rx="1.5" fill="url(#hb)"/>
<rect x="1106" y="270" width="84.6" height="47.4" fill="url(#hb)"/>
<path d="M1106 317.2 H1190.6 L1179 343.4 H1118.2 Z" fill="url(#ht)"/>
<rect x="1126.6" y="343" width="43.7" height="24.2" fill="url(#hb)"/>
<rect x="1130" y="367" width="37" height="18.8" fill="url(#hb)"/>
<rect x="1126.6" y="385.5" width="43.7" height="35.9" fill="url(#hb)"/>
<!-- shank -->
<rect x="1138.6" y="421.2" width="20" height="41.6" fill="url(#s1)"/>
<rect x="1138.6" y="462.5" width="20" height="19.8" fill="url(#s2)"/>
<path d="M1138.6 482 H1158.6 V518.5 Q1158.6 522.6 1154.5 522.6 H1142.7 Q1138.6 522.6 1138.6 518.5 Z" fill="url(#s3)"/>
<circle cx="1148" cy="522.2" r="3.6" fill="#000"/>
<!-- scale box -->
<rect x="1317" y="541.5" width="69" height="34" rx="3" fill="#000" opacity=".13" filter="url(#blr)"/>
<rect x="1316" y="539.3" width="70" height="34.4" rx="3" fill="#fff"/>
<path d="M1321.8 555.2 V561.9 H1342.3 V555.2 M1332 558 V561.9" fill="none" stroke="#2a2a2a" stroke-width="1.35"/>
<text x="1349.6" y="562.4" font-family="Liberation Sans" font-size="13.6" fill="#3a3a3a" textLength="30.4" lengthAdjust="spacing">1 cm</text>
</svg>

 <div class="abs" style="left:261.4px;top:558px;width:1px;height:444px;background:#e6e7e9"></div>
<div class="prow" style="top:559px"><span class="k" style="letter-spacing:0.827px">Description</span></div>
<div class="prow" style="top:591px"><span class="k" style="letter-spacing:1.033px">Distributeur</span></div>
<div class="prow" style="top:623px"><span class="k" style="letter-spacing:1.025px">ID produit</span></div>
<div class="prow" style="top:655px"><span class="k" style="letter-spacing:0.689px">Lien vers le produit</span></div>
<div class="prow" style="top:687px"><span class="k" style="letter-spacing:0.710px">Diamètre</span><span class="v" style="letter-spacing:0.418px">10 mm</span></div>
<div class="prow" style="top:719px"><span class="k" style="letter-spacing:0.614px">Diamètre du corps</span><span class="v" style="letter-spacing:0.418px">10 mm</span></div>
<div class="prow" style="top:751px"><span class="k" style="letter-spacing:0.773px">Longueur totale</span><span class="v" style="letter-spacing:0.793px">50 mm</span></div>
<div class="prow" style="top:783px"><span class="k" style="letter-spacing:0.779px">Longueur sous le porte-outil</span><span class="v" style="letter-spacing:0.793px">50 mm</span></div>
<div class="prow" style="top:815px"><span class="k" style="letter-spacing:0.620px">Long. épaulement</span><span class="v" style="letter-spacing:0.793px">30 mm</span></div>
<div class="prow" style="top:847px"><span class="k" style="letter-spacing:0.661px">Longueur de dent</span><span class="v" style="letter-spacing:0.618px">20 mm</span></div>
<div class="prow" style="top:879px"><span class="k" style="letter-spacing:0.675px">Rayon de bout d'outil</span><span class="v" style="letter-spacing:0.271px">2.5 mm</span></div>
<div class="prow" style="top:911px"><span class="k" style="letter-spacing:0.683px">Prise en charge du lubrifiant</span><span class="v" style="letter-spacing:0.859px">no</span></div>
<div class="prow" style="top:943px"><span class="k" style="letter-spacing:0.287px">Type</span><span class="v" style="letter-spacing:0.785px">bull nose end mill</span></div>
<div class="prow" style="top:975px"><span class="k" style="letter-spacing:0.785px">Unité</span><span class="v" style="letter-spacing:1.082px">millimeters</span></div>

 <div class="abs sb" style="left:495px;top:558.5px;width:8px;height:131.5px;border-radius:3px"></div>
</div>

<div class="abs" id="close">Fermer</div>

<svg class="abs" style="left:0;top:0;pointer-events:none" width="1396" height="1078" viewBox="0 0 1396 1078">
 <g fill="none" stroke="#ed1c24">
  <rect x="4.55" y="862.65" width="878.65" height="36.4" stroke-width="4.7"/>
  <path d="M100.5 766.5 V810.35 H94.5 L106.1 854.7 L117.7 810.35 H111.5 V766.5 Z" stroke-width="4.75" stroke-linejoin="round"/>
  <rect x="81.35" y="725.55" width="49.4" height="36.75" stroke-width="4.7"/>
 </g>
</svg>

</body></html>
